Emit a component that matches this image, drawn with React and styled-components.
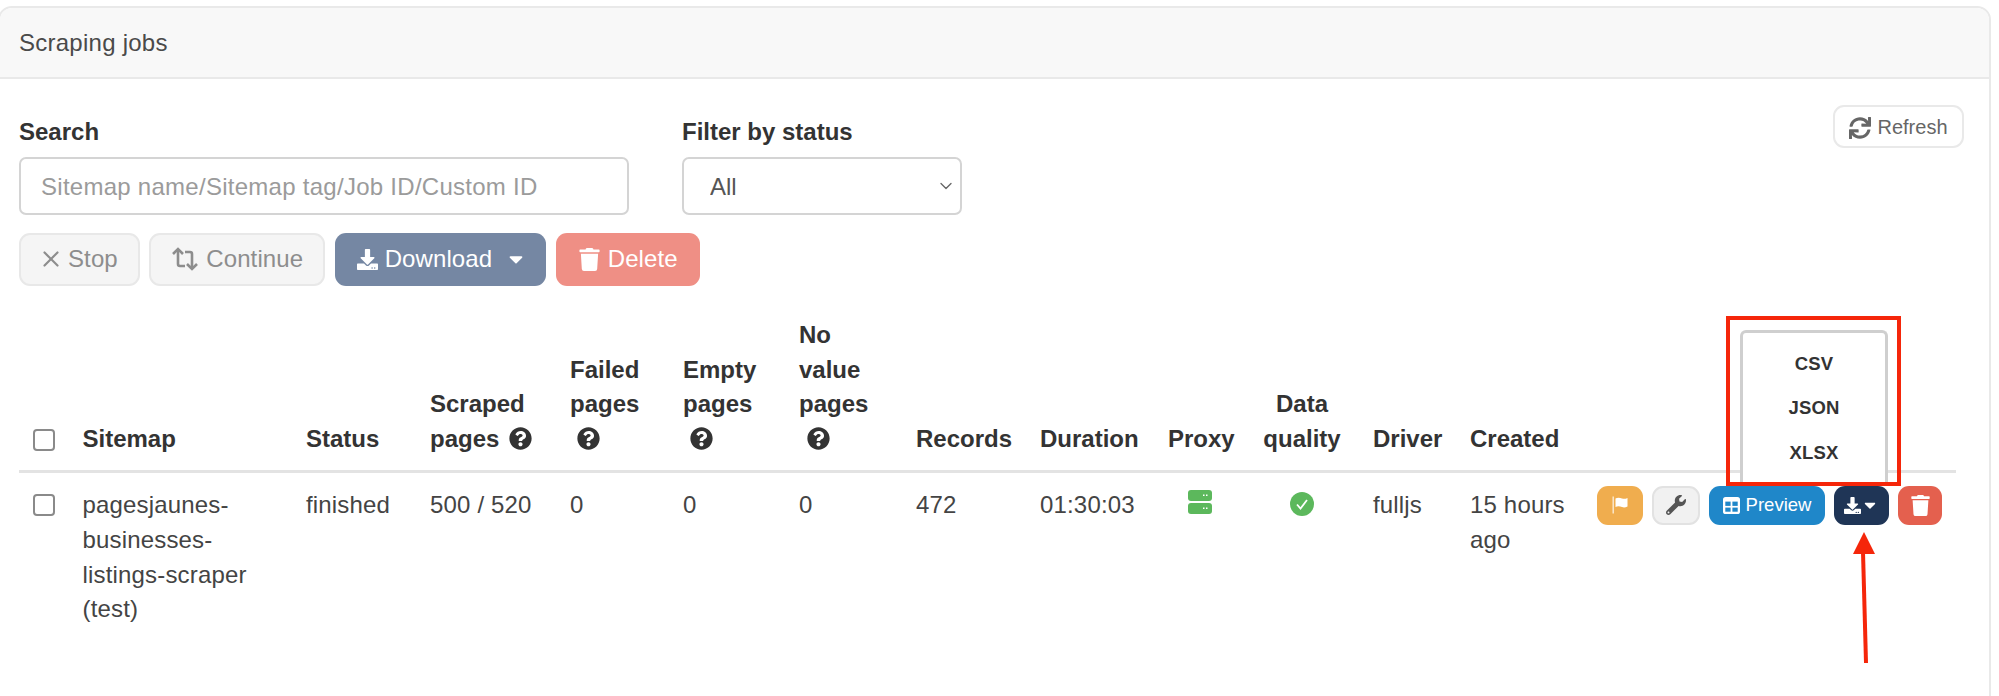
import React from 'react';
import styled, { createGlobalStyle } from 'styled-components';
import { FaQuestionCircle, FaWrench, FaDownload, FaCaretDown, FaTrash, FaSync } from 'react-icons/fa';
import { ChevronDown, X } from 'lucide-react';

const Global = createGlobalStyle`
  html, body { margin: 0; padding: 0; background: #fff; height: 696px; overflow: hidden; }
  * { box-sizing: border-box; }
  body { font-family: "Liberation Sans", Arial, sans-serif; font-size: 24px; line-height: 34.8px; color: #3b3b3b; }
`;

const Page = styled.div`
  height: 696px;
  padding: 6px 8px 0 0;
  background: #fff;
  overflow: hidden;
`;
const Card = styled.section`
  height: 760px;
  margin-left: -2px;
  border: 2px solid #e9e9e9;
  border-radius: 14px;
`;
const CardHeader = styled.header`
  height: 71px;
  padding: 2px 0 0 19px;
  display: flex;
  align-items: center;
  background: #f8f8f8;
  border-bottom: 2px solid #e9e9e9;
  border-radius: 12px 12px 0 0;
  color: #4a4a4a;
  letter-spacing: 0.25px;
`;
const CardBody = styled.div`
  padding: 36px 25px 0 19px;
`;
const FilterRow = styled.div`
  display: flex;
  align-items: flex-start;
  gap: 53px;
`;
const Field = styled.label`
  display: flex;
  flex-direction: column;
  gap: 7px;
  font-weight: 700;
  color: #333;
`;
const SearchInput = styled.input`
  width: 610px;
  height: 58px;
  padding: 2px 20px 0;
  border: 2px solid #d4d4d4;
  border-radius: 7px;
  background: #fff;
  font: 400 24px "Liberation Sans", Arial, sans-serif;
  letter-spacing: 0.27px;
  color: #444;
  &::placeholder { color: #9b9b9b; opacity: 1; }
`;
const SelectWrap = styled.div`
  position: relative;
  width: 280px;
  color: #666;
`;
const Select = styled.select`
  appearance: none;
  width: 100%;
  height: 58px;
  padding: 2px 26px 0;
  border: 2px solid #d4d4d4;
  border-radius: 7px;
  background: #fff;
  font: 400 24px "Liberation Sans", Arial, sans-serif;
  color: #555;
`;
const Chevron = styled(ChevronDown)`
  position: absolute;
  right: 6px;
  top: 19px;
  width: 20px;
  height: 20px;
  pointer-events: none;
`;
const RefreshButton = styled.button`
  margin: -10px 0 0 auto;
  width: 131px;
  height: 43px;
  padding: 2px 0 0;
  display: flex;
  align-items: center;
  justify-content: center;
  gap: 6px;
  background: #fff;
  border: 2px solid #e9e9e9;
  border-radius: 11px;
  color: #666;
  font: 400 20px "Liberation Sans", Arial, sans-serif;
  svg { width: 22px; height: 22px; }
`;
const Toolbar = styled.div`
  display: flex;
  gap: 9.5px;
  margin-top: 18px;
`;
const ToolButton = styled.button`
  height: 53px;
  padding: 0 20px;
  display: flex;
  align-items: center;
  gap: 7px;
  border-radius: 11px;
  border: 2px solid ${p => p.$border || 'transparent'};
  background: ${p => p.$bg};
  color: ${p => p.$fg};
  font: 400 24px "Liberation Sans", Arial, sans-serif;
  letter-spacing: 0.1px;
  white-space: nowrap;
`;
const StopGlyph = styled(X)`
  width: 26px;
  height: 26px;
  margin: 0 -3px 0 -3px;
`;
const SplitCaret = styled(FaCaretDown)`
  width: 22px;
  height: 22px;
  margin: 0 -3px 0 6px;
`;
const Table = styled.table`
  margin-top: 18px;
  width: 1937px;
  table-layout: fixed;
  border-collapse: separate;
  border-spacing: 0;
`;
const Th = styled.th`
  padding: 14px 14px 13px;
  text-align: ${p => (p.$center ? 'center' : 'left')};
  vertical-align: bottom;
  font-weight: 700;
  color: #333;
  border-bottom: 3px solid #e3e3e3;
`;
const Td = styled.td`
  padding: 15px 14px;
  text-align: left;
  vertical-align: top;
  color: #444;
  letter-spacing: 0.17px;
`;
const Help = styled(FaQuestionCircle)`
  width: 23px;
  height: 23px;
  color: #333;
  vertical-align: -3px;
  margin-left: ${p => p.$ml}px;
`;
const Box = styled.span`
  display: block;
  width: 22px;
  height: 22px;
  margin-bottom: ${p => p.$mb || 0}px;
  margin-top: ${p => p.$mt || 0}px;
  background: #fff;
  border: 2px solid #8a8a8a;
  border-radius: 4px;
`;
const CellIcon = styled.div`
  display: flex;
  justify-content: center;
  margin-top: ${p => p.$mt}px;
`;
const Actions = styled.div`
  display: flex;
  gap: 9px;
  margin-top: -2px;
`;
const ActionButton = styled.button`
  position: relative;
  height: 39px;
  width: ${p => p.$w}px;
  padding: 0;
  display: flex;
  align-items: center;
  justify-content: center;
  gap: ${p => p.$gap || 0}px;
  border-radius: 11px;
  border: ${p => (p.$border ? `2px solid ${p.$border}` : 'none')};
  background: ${p => p.$bg};
  color: ${p => p.$fg || '#fff'};
  font: 400 18.5px "Liberation Sans", Arial, sans-serif;
`;
const DownloadWrap = styled.div`
  position: relative;
`;
const Menu = styled.div`
  position: absolute;
  right: 1px;
  bottom: 100%;
  width: 148px;
  height: 156px;
  padding-top: 9px;
  display: flex;
  flex-direction: column;
  align-items: center;
  background: #fff;
  border: 3px solid #cfcfcf;
  border-bottom: none;
  border-radius: 6px 6px 0 0;
`;
const MenuItem = styled.div`
  height: 44.5px;
  line-height: 44.5px;
  font-weight: 700;
  font-size: 18.5px;
  color: #333;
`;
const RedBox = styled.div`
  position: absolute;
  right: -12px;
  bottom: 100%;
  width: 175px;
  height: 170px;
  border: 4px solid #f5260a;
  pointer-events: none;
`;
const Arrow = styled.svg`
  position: absolute;
  left: 17px;
  top: 46px;
  width: 26px;
  height: 132px;
`;

const FlagIcon = () => (
  <svg width="17" height="18" viewBox="0 0 17 18" fill="#fff">
    <rect x="0.5" y="0.5" width="1.4" height="17" opacity="0.75" />
    <path d="M3.5 2.5c2.5-1.3 4.5-.6 6.5 0s3.6.3 5.5-.6v8.6c-1.900.9-3.500 1.200-5.500.6s-4-1.300-6.500 0z" />
  </svg>
);
const TableIcon = () => (
  <svg width="17" height="17" viewBox="0 0 17 17">
    <rect width="17" height="17" rx="2.600" fill="#fff" />
    <rect x="2.300" y="4.600" width="5.300" height="4.300" fill="#1f87c9" />
    <rect x="9.400" y="4.600" width="5.300" height="4.300" fill="#1f87c9" />
    <rect x="2.300" y="10.600" width="5.300" height="4.100" fill="#1f87c9" />
    <rect x="9.400" y="10.600" width="5.300" height="4.100" fill="#1f87c9" />
  </svg>
);
const ContinueIcon = () => (
  <svg width="28" height="26" viewBox="0 0 28 26" fill="none" stroke="#8d8d8d" strokeWidth="2.600">
    <path d="M7 3v15a2 2 0 0 0 2 2h5" />
    <path d="M2 8l5-5 5 5" />
    <path d="M21 23V8a2 2 0 0 0-2-2h-5" />
    <path d="M16 18l5 5 5-5" />
  </svg>
);
const ServerIcon = () => (
  <svg width="24" height="24" viewBox="0 0 24 24">
    <rect width="24" height="11" rx="3" fill="#5cb85c" />
    <rect width="24" height="11" y="13" rx="3" fill="#5cb85c" />
    <g fill="#fff">
      <rect x="15" y="4.500" width="1.500" height="1.500" /><rect x="18" y="4.500" width="1.500" height="1.500" />
      <rect x="15" y="17.500" width="1.500" height="1.500" /><rect x="18" y="17.500" width="1.500" height="1.500" />
    </g>
  </svg>
);
const CheckIcon = () => (
  <svg width="24" height="24" viewBox="0 0 24 24">
    <circle cx="12" cy="12" r="12" fill="#5cb85c" />
    <path d="M7 12.500l3.500 4L17 8" fill="none" stroke="#fff" strokeWidth="1.800" />
  </svg>
);

const columns = [49.5, 223.5, 124, 140, 113, 116, 117, 124, 128, 91, 114, 97, 127, 373];

export default function App() {
  return (
    <Page>
      <Global />
      <Card>
        <CardHeader>Scraping jobs</CardHeader>
        <CardBody>
          <FilterRow>
            <Field>
              Search
              <SearchInput placeholder="Sitemap name/Sitemap tag/Job ID/Custom ID" />
            </Field>
            <Field>
              Filter by status
              <SelectWrap>
                <Select defaultValue="All"><option>All</option></Select>
                <Chevron strokeWidth={1.6} />
              </SelectWrap>
            </Field>
            <RefreshButton><FaSync />Refresh</RefreshButton>
          </FilterRow>
          <Toolbar>
            <ToolButton $bg="#f5f5f5" $border="#e8e8e8" $fg="#8d8d8d"><StopGlyph strokeWidth={2} />Stop</ToolButton>
            <ToolButton $bg="#f5f5f5" $border="#e8e8e8" $fg="#8d8d8d"><ContinueIcon />Continue</ToolButton>
            <ToolButton $bg="#7587a3" $fg="#fff">
              <FaDownload size={21} />Download<SplitCaret />
            </ToolButton>
            <ToolButton $bg="#ef8f85" $fg="#fff"><FaTrash size={23} />Delete</ToolButton>
          </Toolbar>
          <Table>
            <colgroup>
              {columns.map((w, i) => <col key={i} style={{ width: w }} />)}
            </colgroup>
            <thead>
              <tr>
                <Th><Box $mb={6} /></Th>
                <Th>Sitemap</Th>
                <Th>Status</Th>
                <Th>Scraped pages <Help $ml={3} /></Th>
                <Th>Failed pages <Help $ml={7} /></Th>
                <Th>Empty pages <Help $ml={7} /></Th>
                <Th>No value pages <Help $ml={8} /></Th>
                <Th>Records</Th>
                <Th>Duration</Th>
                <Th>Proxy</Th>
                <Th $center>Data quality</Th>
                <Th>Driver</Th>
                <Th>Created</Th>
                <Th />
              </tr>
            </thead>
            <tbody>
              <tr>
                <Td><Box $mt={6} /></Td>
                <Td>pagesjaunes-businesses-listings-scraper (test)</Td>
                <Td>finished</Td>
                <Td>500 / 520</Td>
                <Td>0</Td>
                <Td>0</Td>
                <Td>0</Td>
                <Td>472</Td>
                <Td>01:30:03</Td>
                <Td><CellIcon $mt={2}><ServerIcon /></CellIcon></Td>
                <Td><CellIcon $mt={4}><CheckIcon /></CellIcon></Td>
                <Td>fulljs</Td>
                <Td>15 hours ago</Td>
                <Td>
                  <Actions>
                    <ActionButton $w={46} $bg="#f0ad4e"><FlagIcon /></ActionButton>
                    <ActionButton $w={48} $bg="#f1f1f1" $border="#e2e2e2" $fg="#555"><FaWrench size={20} /></ActionButton>
                    <ActionButton $w={116} $gap={6} $bg="#1f87c9"><TableIcon />Preview</ActionButton>
                    <DownloadWrap>
                      <Menu>
                        <MenuItem>CSV</MenuItem>
                        <MenuItem>JSON</MenuItem>
                        <MenuItem>XLSX</MenuItem>
                      </Menu>
                      <RedBox />
                      <ActionButton $w={55} $bg="#1f3556"><FaDownload size={17} /><FaCaretDown size={18} /></ActionButton>
                      <Arrow viewBox="0 0 26 132">
                        <path d="M13 0L24 22H2z" fill="#f5260a" />
                        <path d="M12 20L15 131" stroke="#f5260a" strokeWidth="4" fill="none" />
                      </Arrow>
                    </DownloadWrap>
                    <ActionButton $w={44} $bg="#e4604e"><FaTrash size={21} /></ActionButton>
                  </Actions>
                </Td>
              </tr>
            </tbody>
          </Table>
        </CardBody>
      </Card>
    </Page>
  );
}
